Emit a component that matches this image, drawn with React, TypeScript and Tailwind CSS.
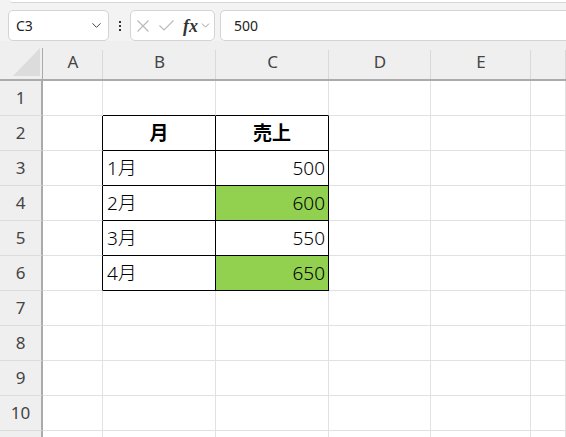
import { ChevronDown } from 'lucide-react';

const cols = [
  { key: 'A', w: 'w-[60px]' },
  { key: 'B', w: 'w-[113px]' },
  { key: 'C', w: 'w-[113px]' },
  { key: 'D', w: 'w-[102px]' },
  { key: 'E', w: 'w-[100px]' },
  { key: 'F', w: 'flex-1' },
];

const data: Record<number, { b: string; c: string; bold?: boolean; green?: boolean }> = {
  2: { b: '月', c: '売上', bold: true },
  3: { b: '1月', c: '500' },
  4: { b: '2月', c: '600', green: true },
  5: { b: '3月', c: '550' },
  6: { b: '4月', c: '650', green: true },
};

function Cell({ row, col }: { row: number; col: string }) {
  const d = data[row];
  const inTable = !!d && (col === 'B' || col === 'C');
  const blackRight = d && (col === 'A' || col === 'B' || col === 'C');
  const blackBottom = (row === 1 || d) && (col === 'B' || col === 'C');
  const w = cols.find((c) => c.key === col)!.w;
  let text = '';
  let align = 'justify-start pl-[4px]';
  if (inTable) {
    text = col === 'B' ? d.b : d.c;
    if (d.bold) align = 'justify-center';
    else if (col === 'C') align = 'justify-end pr-[3px]';
  }
  return (
    <div
      className={`${w} h-full shrink-0 flex items-center border-r border-b ${
        blackRight ? 'border-r-black' : 'border-r-[#e1e1e1]'
      } ${blackBottom ? 'border-b-black' : 'border-b-[#e1e1e1]'} ${
        inTable && col === 'C' && d.green ? 'bg-[#92d050]' : 'bg-white'
      } ${align} ${d?.bold ? 'font-bold' : 'font-light'} text-[19px] text-black`}
    >
      {text}
    </div>
  );
}

export default function App() {
  const rows = [1, 2, 3, 4, 5, 6, 7, 8, 9, 10, 11];
  return (
    <div
      className="w-[566px] h-[437px] overflow-hidden bg-[#f3f3f3] flex flex-col"
      style={{ fontFamily: '"Noto Sans", "Noto Sans CJK JP", sans-serif' }}
    >
      {/* ribbon bottom edge */}
      <div className="h-[3px] ml-[10px] bg-white rounded-bl-[4px] border-b border-[#d6d6d6] shrink-0" />

      {/* formula bar */}
      <div className="h-[31px] mt-[7px] flex items-stretch shrink-0">
        <div className="ml-[8px] w-[101px] bg-white border border-[#d4d4d4] rounded-[5px] flex items-center justify-between pl-[7px] pr-[4px] text-[14px] text-[#222]">
          <span>C3</span>
          <ChevronDown size={15} strokeWidth={1.6} className="text-[#444]" />
        </div>
        <div className="w-[21px] flex flex-col items-center justify-center gap-[2px]">
          <span className="w-[2px] h-[2px] bg-[#333]" />
          <span className="w-[2px] h-[2px] bg-[#333]" />
          <span className="w-[2px] h-[2px] bg-[#333]" />
        </div>
        <div className="w-[85px] bg-white border border-[#d4d4d4] rounded-[5px] flex items-center pl-[6px] pr-[2px]">
          <svg width="12" height="12" viewBox="0 0 12 12" className="shrink-0">
            <path d="M0.5 0.5 L11.5 11.5 M11.5 0.5 L0.5 11.5" stroke="#b8b8b8" strokeWidth="1.1" fill="none" />
          </svg>
          <svg width="15" height="11" viewBox="0 0 15 11" className="ml-[10px] shrink-0">
            <path d="M0.5 5.5 L5 10 L14.5 0.5" stroke="#b8b8b8" strokeWidth="1.1" fill="none" />
          </svg>
          <span
            className="ml-[9px] text-[18px] italic font-bold text-[#333] leading-none"
            style={{ fontFamily: '"Liberation Serif", serif' }}
          >
            fx
          </span>
          <ChevronDown size={13} strokeWidth={1.5} className="ml-[1px] text-[#888]" />
        </div>
        <div className="ml-[5px] flex-1 bg-white border border-r-0 border-[#d4d4d4] rounded-l-[5px] flex items-center pl-[13px] text-[14px] text-[#222]">
          500
        </div>
      </div>

      {/* column headers */}
      <div className="h-[40px] flex shrink-0 border-b-2 border-[#ababab] bg-[#efefef]">
        <div className="w-[43px] shrink-0 border-r border-[#ababab] flex items-end justify-end pb-[3px] pr-[2px] mt-[7px]">
          <svg width="27" height="28" viewBox="0 0 27 28">
            <polygon points="27,0 27,28 0,28" fill="#dcdcdc" />
          </svg>
        </div>
        {cols.map((c) => (
          <div
            key={c.key}
            className={`${c.w} shrink-0 flex items-center justify-center relative text-[17px] text-[#444] pt-[4px]`}
          >
            {c.key !== 'F' ? c.key : ''}
            <span className="absolute right-0 top-[9px] bottom-0 w-px bg-[#d9d9d9]" />
          </div>
        ))}
      </div>

      {/* rows */}
      {rows.map((r) => (
        <div key={r} className="h-[35px] flex shrink-0">
          <div className="w-[43px] shrink-0 bg-[#efefef] border-r-2 border-[#ababab] border-b border-b-[#dcdcdc] flex items-center justify-center text-[17px] text-[#444]">
            {r < 11 ? r : ''}
          </div>
          {cols.map((c) => (
            <Cell key={c.key} row={r} col={c.key} />
          ))}
        </div>
      ))}
    </div>
  );
}
